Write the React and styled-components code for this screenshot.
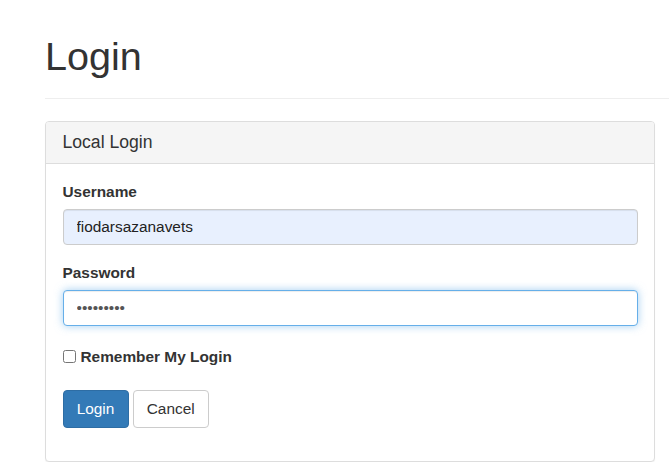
import React from 'react'
import styled, {createGlobalStyle, css} from 'styled-components'

const GlobalStyle = createGlobalStyle`
    body {
        margin: 0;
        background: #fff;
        color: #333;
        font-family: "Liberation Sans", Arial, Helvetica, sans-serif;
        font-size: 15.4px;
        line-height: 1.42857;
    }
    * { box-sizing: border-box; }
`

const Page = styled.div`
    padding: 35px 0 0 45px;
`

const PageHeader = styled.div`
    padding-bottom: 19px;
    border-bottom: 1px solid #eee;
    margin-bottom: 22px;
`

const Title = styled.h1`
    margin: 0;
    font-size: 39.6px;
    font-weight: 500;
    line-height: 1.1;
    color: #333;
`

const Panel = styled.div`
    width: 610px;
    border: 1px solid #ddd;
    border-radius: 4px;
    background: #fff;
    box-shadow: 0 1px 1px rgba(0,0,0,.05);
`

const PanelHeading = styled.div`
    padding: 11px 16.5px;
    background: #f5f5f5;
    border-bottom: 1px solid #ddd;
    border-radius: 3px 3px 0 0;
`

const PanelTitle = styled.h3`
    margin: 0;
    font-size: 17.6px;
    font-weight: 500;
    line-height: 1.1;
    color: #333;
`

const PanelBody = styled.form`
    padding: 17.5px 16.5px 0;
`

const FormGroup = styled.div`
    margin-bottom: 17.5px;
`

const Label = styled.label`
    display: inline-block;
    margin-bottom: 5.5px;
    font-weight: 700;
`

const Input = styled.input`
    display: block;
    width: 100%;
    height: 36px;
    padding: 6px 13px;
    font-family: inherit;
    font-size: 15.4px;
    color: ${p => p.$autofill ? '#222' : '#555'};
    background: ${p => p.$autofill ? '#e8f0fe' : '#fff'};
    border: 1px solid #ccc;
    border-radius: 4px;
    outline: none;
    box-shadow: inset 0 1px 1px rgba(0,0,0,.075);

    ${p => p.$focused && css`
        border-color: #66afe9;
        box-shadow: inset 0 1px 1px rgba(0,0,0,.075), 0 0 8px rgba(102,175,233,.6);
    `}
`

const CheckRow = styled.div`
    display: flex;
    align-items: center;
    gap: 5px;
    height: 22px;
    margin: 20px 0 22px;

    input {
        margin: 0;
        width: 13px;
        height: 13px;
    }
    label {
        font-weight: 700;
    }
`

const Buttons = styled.div`
    display: flex;
    gap: 4px;
    padding-bottom: 33px;
`

const Button = styled.button`
    padding: 7px 13.2px;
    font-family: inherit;
    font-size: 15.4px;
    line-height: 1.42857;
    border-radius: 4px;
    cursor: pointer;
    border: 1px solid ${p => p.$primary ? '#2e6da4' : '#ccc'};
    background: ${p => p.$primary ? '#337ab7' : '#fff'};
    color: ${p => p.$primary ? '#fff' : '#333'};
`

const App = () => {
  return (
    <>
    <GlobalStyle />
    <Page>
        <PageHeader>
            <Title>Login</Title>
        </PageHeader>
        <Panel>
            <PanelHeading>
                <PanelTitle>Local Login</PanelTitle>
            </PanelHeading>
            <PanelBody onSubmit={e => e.preventDefault()}>
                <FormGroup>
                    <Label htmlFor='username'>Username</Label>
                    <Input id='username' $autofill defaultValue='fiodarsazanavets' />
                </FormGroup>
                <FormGroup>
                    <Label htmlFor='password'>Password</Label>
                    <Input id='password' type='password' $focused defaultValue='123456789' />
                </FormGroup>
                <CheckRow>
                    <input type='checkbox' id='remember' />
                    <label htmlFor='remember'>Remember My Login</label>
                </CheckRow>
                <Buttons>
                    <Button $primary>Login</Button>
                    <Button type='button'>Cancel</Button>
                </Buttons>
            </PanelBody>
        </Panel>
    </Page>
    </>
  )
}

export default App
